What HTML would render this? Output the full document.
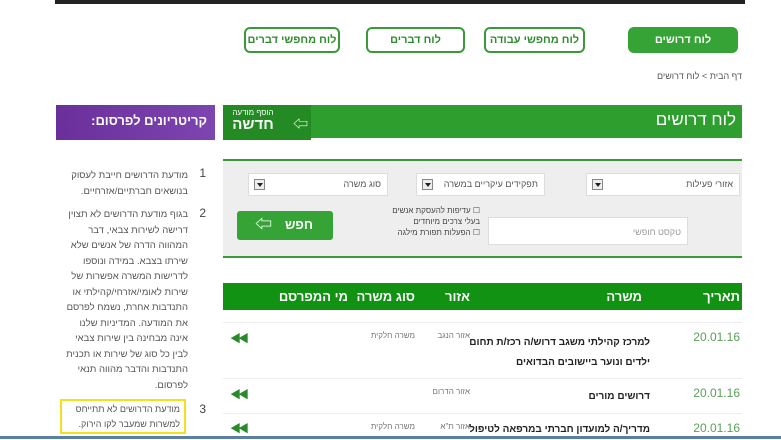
<!DOCTYPE html>
<html dir="rtl"><head><meta charset="utf-8"><style>
*{box-sizing:border-box;margin:0;padding:0}
body{width:781px;height:439px;overflow:hidden;background:#fff;font-family:"Liberation Sans","Noto Sans CJK JP",sans-serif;position:relative;color:#333}
.a{position:absolute}
.tab{position:absolute;top:27px;height:26px;border:2px solid #3a9a3a;border-radius:6px;color:#2e8b2e;font-weight:bold;font-size:11px;text-align:center;line-height:22px;background:#fff}
.sel{position:absolute;top:173px;height:23px;background:#fff;border:1px solid #ddd;font-size:9px;color:#555;padding-right:6px;line-height:21px}
.sel i{position:absolute;left:5px;top:5px;width:11px;height:11px;border:1px solid #888;background:#eee}
.sel i:after{content:"";position:absolute;left:2px;top:3px;border:3px solid transparent;border-top:4px solid #222}
.th{position:absolute;top:283px;color:#fff;font-weight:bold;font-size:13px;line-height:27px}
.d{position:absolute;right:41px;color:#5aa05a;font-size:12px}
.t{position:absolute;right:131px;font-weight:bold;font-size:10px;color:#222;line-height:20px}
.s{position:absolute;font-size:8px;color:#777}
.ar{position:absolute;left:230px;color:#2a8a2a;font-size:11px;letter-spacing:-3px;font-weight:bold}
.hr{position:absolute;left:223px;width:519px;height:1px;background:#eee}
.sb{position:absolute;right:593px;width:128px;font-size:9.5px;color:#555;line-height:15.5px}
</style></head><body>
<div class="a" style="left:55px;top:0;width:690px;height:4px;background:#222"></div>
<div class="tab" style="left:628px;width:110px;background:#36a336;color:#fff;border-color:#36a336">לוח דרושים</div>
<div class="tab" style="left:484px;width:101px">לוח מחפשי עבודה</div>
<div class="tab" style="left:366px;width:99px">לוח דברים</div>
<div class="tab" style="left:244px;width:96px">לוח מחפשי דברים</div>
<div class="a" style="right:39px;top:71px;font-size:9px;color:#555">דף הבית &gt; לוח דרושים</div>
<div class="a" style="left:223px;top:105px;width:519px;height:33px;background:#2e9e2e"></div>
<div class="a" style="right:45px;top:110px;color:#fff;font-size:17px">לוח דרושים</div>
<div class="a" style="left:223px;top:105px;width:88px;height:35px;background:#248a24;color:#fff;text-align:center">
<div style="font-size:8px;margin-top:3px;margin-right:28px">הוסף מודעה</div><div style="font-size:15px;font-weight:bold;margin-right:28px;line-height:15px">חדשה</div>
<div style="position:absolute;left:70px;top:8px;font-size:15px">⇦</div></div>
<div class="a" style="left:223px;top:159px;width:519px;height:99px;background:#eee;border-top:2px solid #3a9a3a;border-bottom:2px solid #3a9a3a"></div>
<div class="sel" style="left:586px;width:154px">אזורי פעילות<i></i></div>
<div class="sel" style="left:416px;width:129px">תפקידים עיקריים במשרה<i></i></div>
<div class="sel" style="left:248px;width:140px">סוג משרה<i></i></div>
<div class="a" style="left:488px;top:217px;width:200px;height:28px;background:#fff;border:1px solid #ddd;font-size:9px;color:#999;padding:9px 6px 0 0">טקסט חופשי</div>
<div class="a" style="left:370px;top:205px;width:110px;font-size:8px;color:#444;line-height:11px;text-align:right">☐ עדיפות להעסקת אנשים<br>בעלי צרכים מיוחדים<br>☐ הפעלות תפורת מילגה</div>
<div class="a" style="left:237px;top:211px;width:96px;height:29px;background:#36a336;border-radius:3px;color:#fff;font-weight:bold;font-size:13px;line-height:28px"><span style="position:absolute;right:20px">חפש</span><span style="position:absolute;left:18px;font-size:17px">⇦</span></div>
<div class="a" style="left:223px;top:283px;width:519px;height:27px;background:#129212"></div>
<div class="th" style="right:41px">תאריך</div>
<div class="th" style="right:139px">משרה</div>
<div class="th" style="right:311px">אזור</div>
<div class="th" style="right:366px">סוג משרה</div>
<div class="th" style="right:433px">מי המפרסם</div>
<div class="hr" style="top:322px"></div>
<div class="d" style="top:330px">20.01.16</div>
<div class="t" style="top:333px">למרכז קהילתי משגב דרוש/ה רכז/ת תחום<br>ילדים ונוער ביישובים הבדואים</div>
<div class="s" style="right:311px;top:331px">אזור הנגב</div>
<div class="s" style="right:366px;top:331px">משרה חלקית</div>
<div class="ar" style="top:330px">◀◀</div>
<div class="hr" style="top:378px"></div>
<div class="d" style="top:386px">20.01.16</div>
<div class="t" style="top:387px">דרושים מורים</div>
<div class="s" style="right:311px;top:387px">אזור הדרום</div>
<div class="ar" style="top:386px">◀◀</div>
<div class="hr" style="top:413px"></div>
<div class="d" style="top:421px">20.01.16</div>
<div class="t" style="top:420px">מדריך/ה למועדון חברתי במרפאה לטיפול</div>
<div class="s" style="right:311px;top:422px">אזור ת"א</div>
<div class="s" style="right:366px;top:422px">משרה חלקית</div>
<div class="ar" style="top:420px">◀◀</div>
<div class="a" style="left:56px;top:105px;width:159px;height:35px;background:linear-gradient(90deg,#6a2f9a,#7d45b0);color:#fff;font-size:13px;font-weight:bold;text-align:right;padding:8px 8px 0 0">קריטריונים לפרסום:</div>
<div class="a" style="right:575px;top:166px;font-size:12px;color:#444">1</div>
<div class="sb" style="top:168px">מודעת הדרושים חייבת לעסוק בנושאים חברתיים/אזרחיים.</div>
<div class="a" style="right:575px;top:206px;font-size:12px;color:#444">2</div>
<div class="sb" style="top:207px">בגוף מודעת הדרושים לא תצוין דרישה לשירות צבאי, דבר המהווה הדרה של אנשים שלא שירתו בצבא. במידה ונוספו לדרישות המשרה אפשרות של שירות לאומי/אזרחי/קהילתי או התנדבות אחרת, נשמח לפרסם את המודעה. המדיניות שלנו אינה מבחינה בין שירות צבאי לבין כל סוג של שירות או תכנית התנדבות והדבר מהווה תנאי לפרסום.</div>
<div class="a" style="right:575px;top:402px;font-size:12px;color:#444">3</div>
<div class="a" style="left:60px;top:399px;width:126px;height:35px;border:2px solid #f2e21a;font-size:9px;color:#555;line-height:15px;padding:1px 4px 0 0">מודעת הדרושים לא תתייחס למשרות שמעבר לקו הירוק.</div>
<div class="a" style="left:0;top:436px;width:781px;height:3px;background:#5a7fa0"></div>
</body></html>
